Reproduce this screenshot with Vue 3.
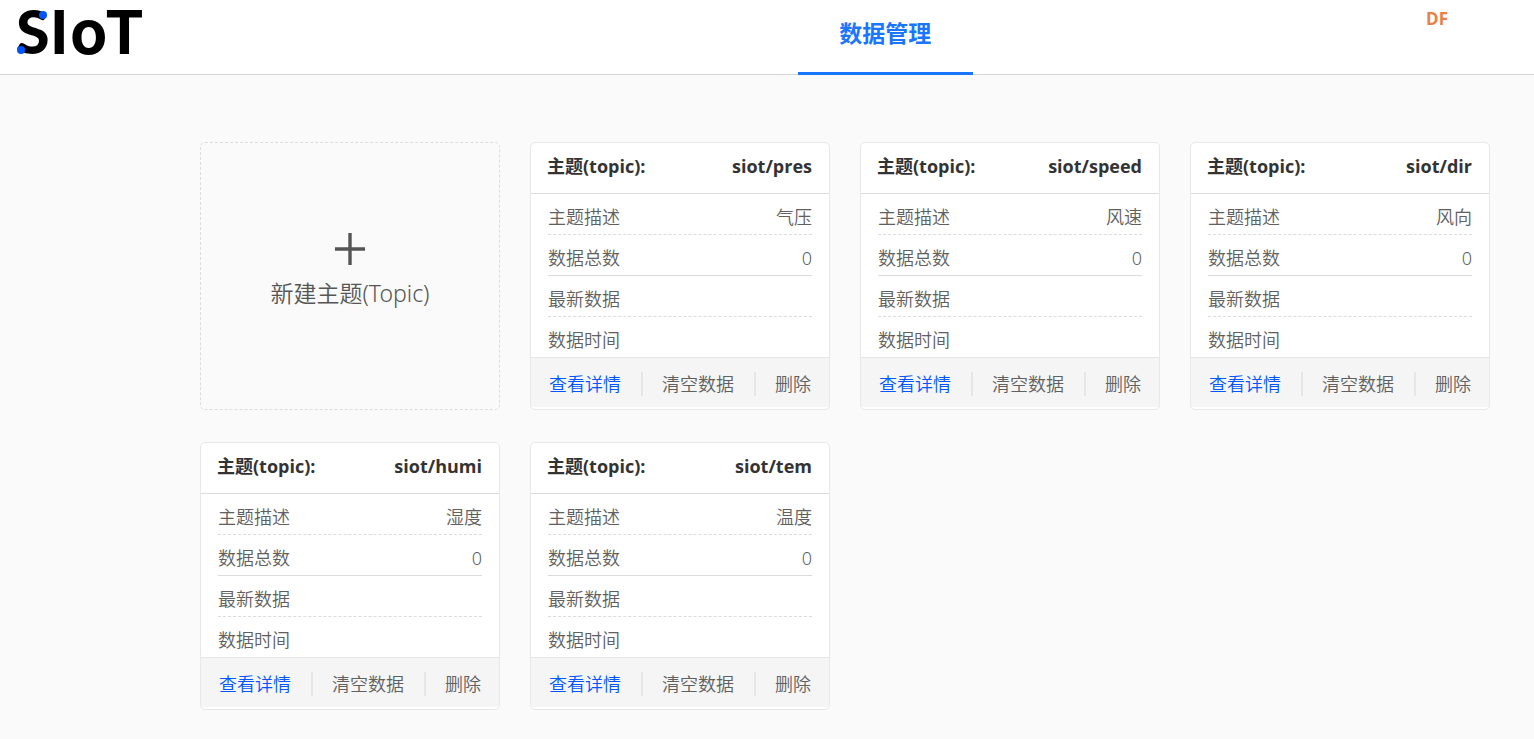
<script setup>
const topics = [
  { name: 'siot/pres', description: '气压', total: 0 },
  { name: 'siot/speed', description: '风速', total: 0 },
  { name: 'siot/dir', description: '风向', total: 0 },
  { name: 'siot/humi', description: '湿度', total: 0 },
  { name: 'siot/tem', description: '温度', total: 0 },
]
</script>

<template>
  <div class="page">
    <header class="topbar">
      <a class="brand" href="#" aria-label="SIoT">
        <svg width="150" height="74" viewBox="0 0 150 74">
          <text class="wordmark" y="54">
            <tspan x="16">S</tspan><tspan x="50">I</tspan><tspan class="round" x="70">o</tspan><tspan x="106">T</tspan>
          </text>
          <circle cx="43" cy="15" r="4" fill="#0055ff" />
          <circle cx="21" cy="50" r="4" fill="#0055ff" />
        </svg>
      </a>
      <nav class="tabs">
        <a class="tab" href="#" aria-current="page">数据管理</a>
      </nav>
      <a class="user" href="#">DF</a>
    </header>

    <main class="grid">
      <button class="create" type="button">
        <svg width="32" height="32" viewBox="0 0 32 32" aria-hidden="true">
          <path d="M16 0V32M1 16H31" fill="none" stroke="#555" stroke-width="3.4" />
        </svg>
        <span>新建主题(Topic)</span>
      </button>

      <article v-for="topic in topics" :key="topic.name" class="card">
        <h2 class="title">
          <span>主题(topic):</span>
          <span>{{ topic.name }}</span>
        </h2>
        <dl class="facts">
          <div class="fact dashed"><dt>主题描述</dt><dd>{{ topic.description }}</dd></div>
          <div class="fact solid"><dt>数据总数</dt><dd>{{ topic.total }}</dd></div>
          <div class="fact dashed"><dt>最新数据</dt><dd></dd></div>
          <div class="fact"><dt>数据时间</dt><dd></dd></div>
        </dl>
        <footer class="actions">
          <button class="action primary" type="button">查看详情</button>
          <i class="bar"></i>
          <button class="action" type="button">清空数据</button>
          <i class="bar"></i>
          <button class="action" type="button">删除</button>
        </footer>
      </article>
    </main>
  </div>
</template>

<style>
body {
  margin: 0;
  background: #fafafa;
}
</style>

<style scoped>
.page {
  min-height: 100vh;
  background: #fafafa;
  color: #606060;
  font-family: "Open Sans", "Noto Sans CJK SC", sans-serif;
  font-size: 18px;
  line-height: 24px;
}

a {
  text-decoration: none;
}

button {
  border: 0;
  padding: 0;
  background: none;
  color: inherit;
  font: inherit;
  cursor: pointer;
}

.topbar {
  display: grid;
  grid-template-columns: 52% auto 1fr;
  height: 75px;
  box-sizing: border-box;
  background: #fff;
  box-shadow: inset 0 -1px #d6d6d6;
}

.brand {
  justify-self: start;
}

.brand svg {
  display: block;
  overflow: visible;
}

.wordmark {
  fill: #000;
  font-family: Lato, sans-serif;
  font-size: 61px;
  font-weight: 900;
}

.round {
  font-family: Inter, sans-serif;
  font-weight: 700;
}

.tabs {
  display: flex;
}

.tab {
  box-sizing: border-box;
  width: 175px;
  padding-top: 18px;
  border-bottom: 3px solid #1a75ff;
  color: #1a75ff;
  font-size: 23px;
  font-weight: 700;
  line-height: 30px;
  text-align: center;
}

.user {
  justify-self: end;
  padding: 7px 86px 0 0;
  color: #e98048;
  font-size: 17px;
  font-weight: 700;
}

.grid {
  display: grid;
  grid-template-columns: repeat(auto-fill, 300px);
  gap: 32px 30px;
  padding: 67px 30px 29px 200px;
}

.create,
.fact {
  font-family: "Noto Sans", "Noto Sans CJK SC", sans-serif;
  font-weight: 350;
}

.create {
  display: flex;
  flex-direction: column;
  align-items: center;
  justify-content: center;
  gap: 13px;
  padding-bottom: 12px;
  border: 1px dashed #dcdcdc;
  border-radius: 5px;
  color: #555;
  font-size: 23px;
  line-height: 30px;
}

.card {
  padding-bottom: 2px;
  border: 1px solid #e8e8e8;
  border-radius: 5px;
  background: #fff;
}

.title {
  display: flex;
  justify-content: space-between;
  margin: 0;
  padding: 11px 17px 15px 16px;
  border-bottom: 1px solid #dcdcdc;
  color: #333;
  font-size: 18px;
  font-weight: 700;
  line-height: 24px;
}

.facts {
  margin: 0;
  padding: 0 17px;
}

.fact {
  display: flex;
  justify-content: space-between;
  padding: 11px 0 5px;
}

.dashed {
  border-bottom: 1px dashed #dcdcdc;
}

.solid {
  border-bottom: 1px solid #dcdcdc;
}

dd {
  margin: 0;
}

.actions {
  display: flex;
  align-items: center;
  justify-content: space-between;
  padding: 14px 18px 11px;
  border-top: 1px solid #e6e6e6;
  background: #f5f5f5;
}

.action {
  font-weight: 350;
}

.primary {
  color: #0055ff;
}

.bar {
  width: 2px;
  height: 24px;
  background: #e6e6e6;
}
</style>
